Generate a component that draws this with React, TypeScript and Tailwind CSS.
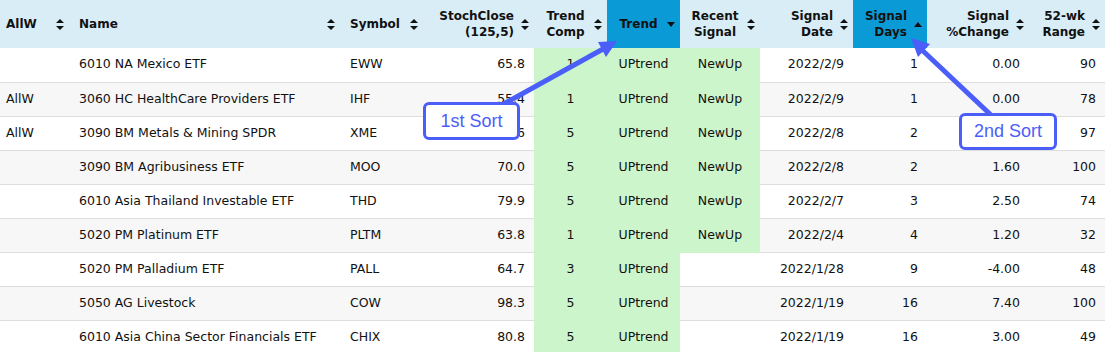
import React from "react";

type Align = "left" | "center" | "right";
type Sort = "both" | "asc" | "desc";

const cols: { label: string[]; w: number; align: Align; sort: Sort }[] = [
  { label: ["AllW"], w: 69, align: "left", sort: "both" },
  { label: ["Name"], w: 271, align: "left", sort: "both" },
  { label: ["Symbol"], w: 83, align: "left", sort: "both" },
  { label: ["StochClose", "(125,5)"], w: 111, align: "right", sort: "both" },
  { label: ["Trend", "Comp"], w: 73, align: "center", sort: "both" },
  { label: ["Trend"], w: 73, align: "center", sort: "desc" },
  { label: ["Recent", "Signal"], w: 80, align: "center", sort: "both" },
  { label: ["Signal", "Date"], w: 93, align: "right", sort: "both" },
  { label: ["Signal", "Days"], w: 74, align: "right", sort: "asc" },
  { label: ["Signal", "%Change"], w: 102, align: "right", sort: "both" },
  { label: ["52-wk", "Range"], w: 76, align: "right", sort: "both" },
];

const rows: string[][] = [
  ["", "6010 NA Mexico ETF", "EWW", "65.8", "1", "UPtrend", "NewUp", "2022/2/9", "1", "0.00", "90"],
  ["AllW", "3060 HC HealthCare Providers ETF", "IHF", "55.4", "1", "UPtrend", "NewUp", "2022/2/9", "1", "0.00", "78"],
  ["AllW", "3090 BM Metals & Mining SPDR", "XME", "75.6", "5", "UPtrend", "NewUp", "2022/2/8", "2", "", "97"],
  ["", "3090 BM Agribusiness ETF", "MOO", "70.0", "5", "UPtrend", "NewUp", "2022/2/8", "2", "1.60", "100"],
  ["", "6010 Asia Thailand Investable ETF", "THD", "79.9", "5", "UPtrend", "NewUp", "2022/2/7", "3", "2.50", "74"],
  ["", "5020 PM Platinum ETF", "PLTM", "63.8", "1", "UPtrend", "NewUp", "2022/2/4", "4", "1.20", "32"],
  ["", "5020 PM Palladium ETF", "PALL", "64.7", "3", "UPtrend", "", "2022/1/28", "9", "-4.00", "48"],
  ["", "5050 AG Livestock", "COW", "98.3", "5", "UPtrend", "", "2022/1/19", "16", "7.40", "100"],
  ["", "6010 Asia China Sector Financials ETF", "CHIX", "80.8", "5", "UPtrend", "", "2022/1/19", "16", "3.00", "49"],
];

function SortIcon({ sort }: { sort: Sort }) {
  if (sort === "both")
    return (
      <svg width="8" height="11" viewBox="0 0 8 11" className="block">
        <polygon points="0,4 4,0 8,4" fill="#111" />
        <polygon points="0,7 8,7 4,11" fill="#111" />
      </svg>
    );
  if (sort === "desc")
    return (
      <svg width="8" height="5" viewBox="0 0 8 5" className="block">
        <polygon points="0,0 8,0 4,5" fill="#111" />
      </svg>
    );
  return (
    <svg width="8" height="5" viewBox="0 0 8 5" className="block">
      <polygon points="0,5 4,0 8,5" fill="#111" />
    </svg>
  );
}

const alignCls: Record<Align, string> = {
  left: "text-left",
  center: "text-center",
  right: "text-right",
};

export default function App() {
  return (
    <div
      className="relative w-[1105px] h-[352px] overflow-hidden bg-white text-[#111]"
      style={{ fontFamily: "'DejaVu Sans', Verdana, sans-serif" }}
    >
      <table className="table-fixed border-collapse w-[1105px] text-[12.5px]">
        <colgroup>
          {cols.map((c, i) => (
            <col key={i} style={{ width: c.w }} />
          ))}
        </colgroup>
        <thead>
          <tr className="h-[48px]">
            {cols.map((c, i) => {
              const sorted = c.sort !== "both";
              return (
                <th
                  key={i}
                  className={`relative p-0 font-bold text-[12px] leading-[16px] align-middle ${alignCls[c.align]} ${
                    sorted ? "bg-[#0a9ad6]" : "bg-[#d9edf7]"
                  }`}
                >
                  <div
                    className={`${i === 0 ? "pl-[6px]" : "pl-[10px]"} pr-[20px] whitespace-nowrap`}
                  >
                    {c.label.map((l, j) => (
                      <div key={j}>{l}</div>
                    ))}
                  </div>
                  <div className="absolute right-[5px] top-0 bottom-0 flex items-center">
                    <SortIcon sort={c.sort} />
                  </div>
                </th>
              );
            })}
          </tr>
        </thead>
        <tbody>
          {rows.map((r, ri) => {
            const stripe = ri % 2 === 1 ? "bg-[#f7f7f7]" : "bg-white";
            return (
              <tr key={ri} className="h-[34px]">
                {r.map((v, ci) => {
                  const c = cols[ci];
                  const green = ci === 4 || ci === 5 || (ci === 6 && v !== "");
                  return (
                    <td
                      key={ci}
                      className={`p-0 h-[34px] border-b whitespace-nowrap align-middle ${
                        green ? "bg-[#ccf5cc] border-[#ccf5cc]" : `${stripe} border-[#dddddd]`
                      } ${alignCls[c.align]} ${
                        ci === 0 ? "pl-[6px]" : c.align === "left" ? "pl-[10px]" : ""
                      } ${c.align === "right" ? "pr-[9px]" : ""}`}
                    >
                      {v}
                    </td>
                  );
                })}
              </tr>
            );
          })}
        </tbody>
      </table>

      <svg
        className="absolute inset-0 pointer-events-none"
        width="1105"
        height="352"
        viewBox="0 0 1105 352"
      >
        <line x1="500" y1="106" x2="603" y2="49" stroke="#4b5ef7" strokeWidth="5" />
        <polygon points="617,41 606,57 598,42" fill="#4b5ef7" />
        <line x1="992" y1="116" x2="922" y2="50" stroke="#4b5ef7" strokeWidth="5" />
        <polygon points="911,38 930,44 918,57" fill="#4b5ef7" />
      </svg>

      <div
        className="absolute left-[423px] top-[102px] w-[97px] h-[38px] rounded-[6px] border-[3px] border-[#4b5ef7] bg-white flex items-center justify-center text-[18px] text-[#4b5ef7]"
        style={{ fontFamily: "'Liberation Sans', Arial, sans-serif" }}
      >
        1st Sort
      </div>
      <div
        className="absolute left-[959px] top-[113px] w-[98px] h-[37px] rounded-[6px] border-[3px] border-[#4b5ef7] bg-white flex items-center justify-center text-[18px] text-[#4b5ef7]"
        style={{ fontFamily: "'Liberation Sans', Arial, sans-serif" }}
      >
        2nd Sort
      </div>
    </div>
  );
}
